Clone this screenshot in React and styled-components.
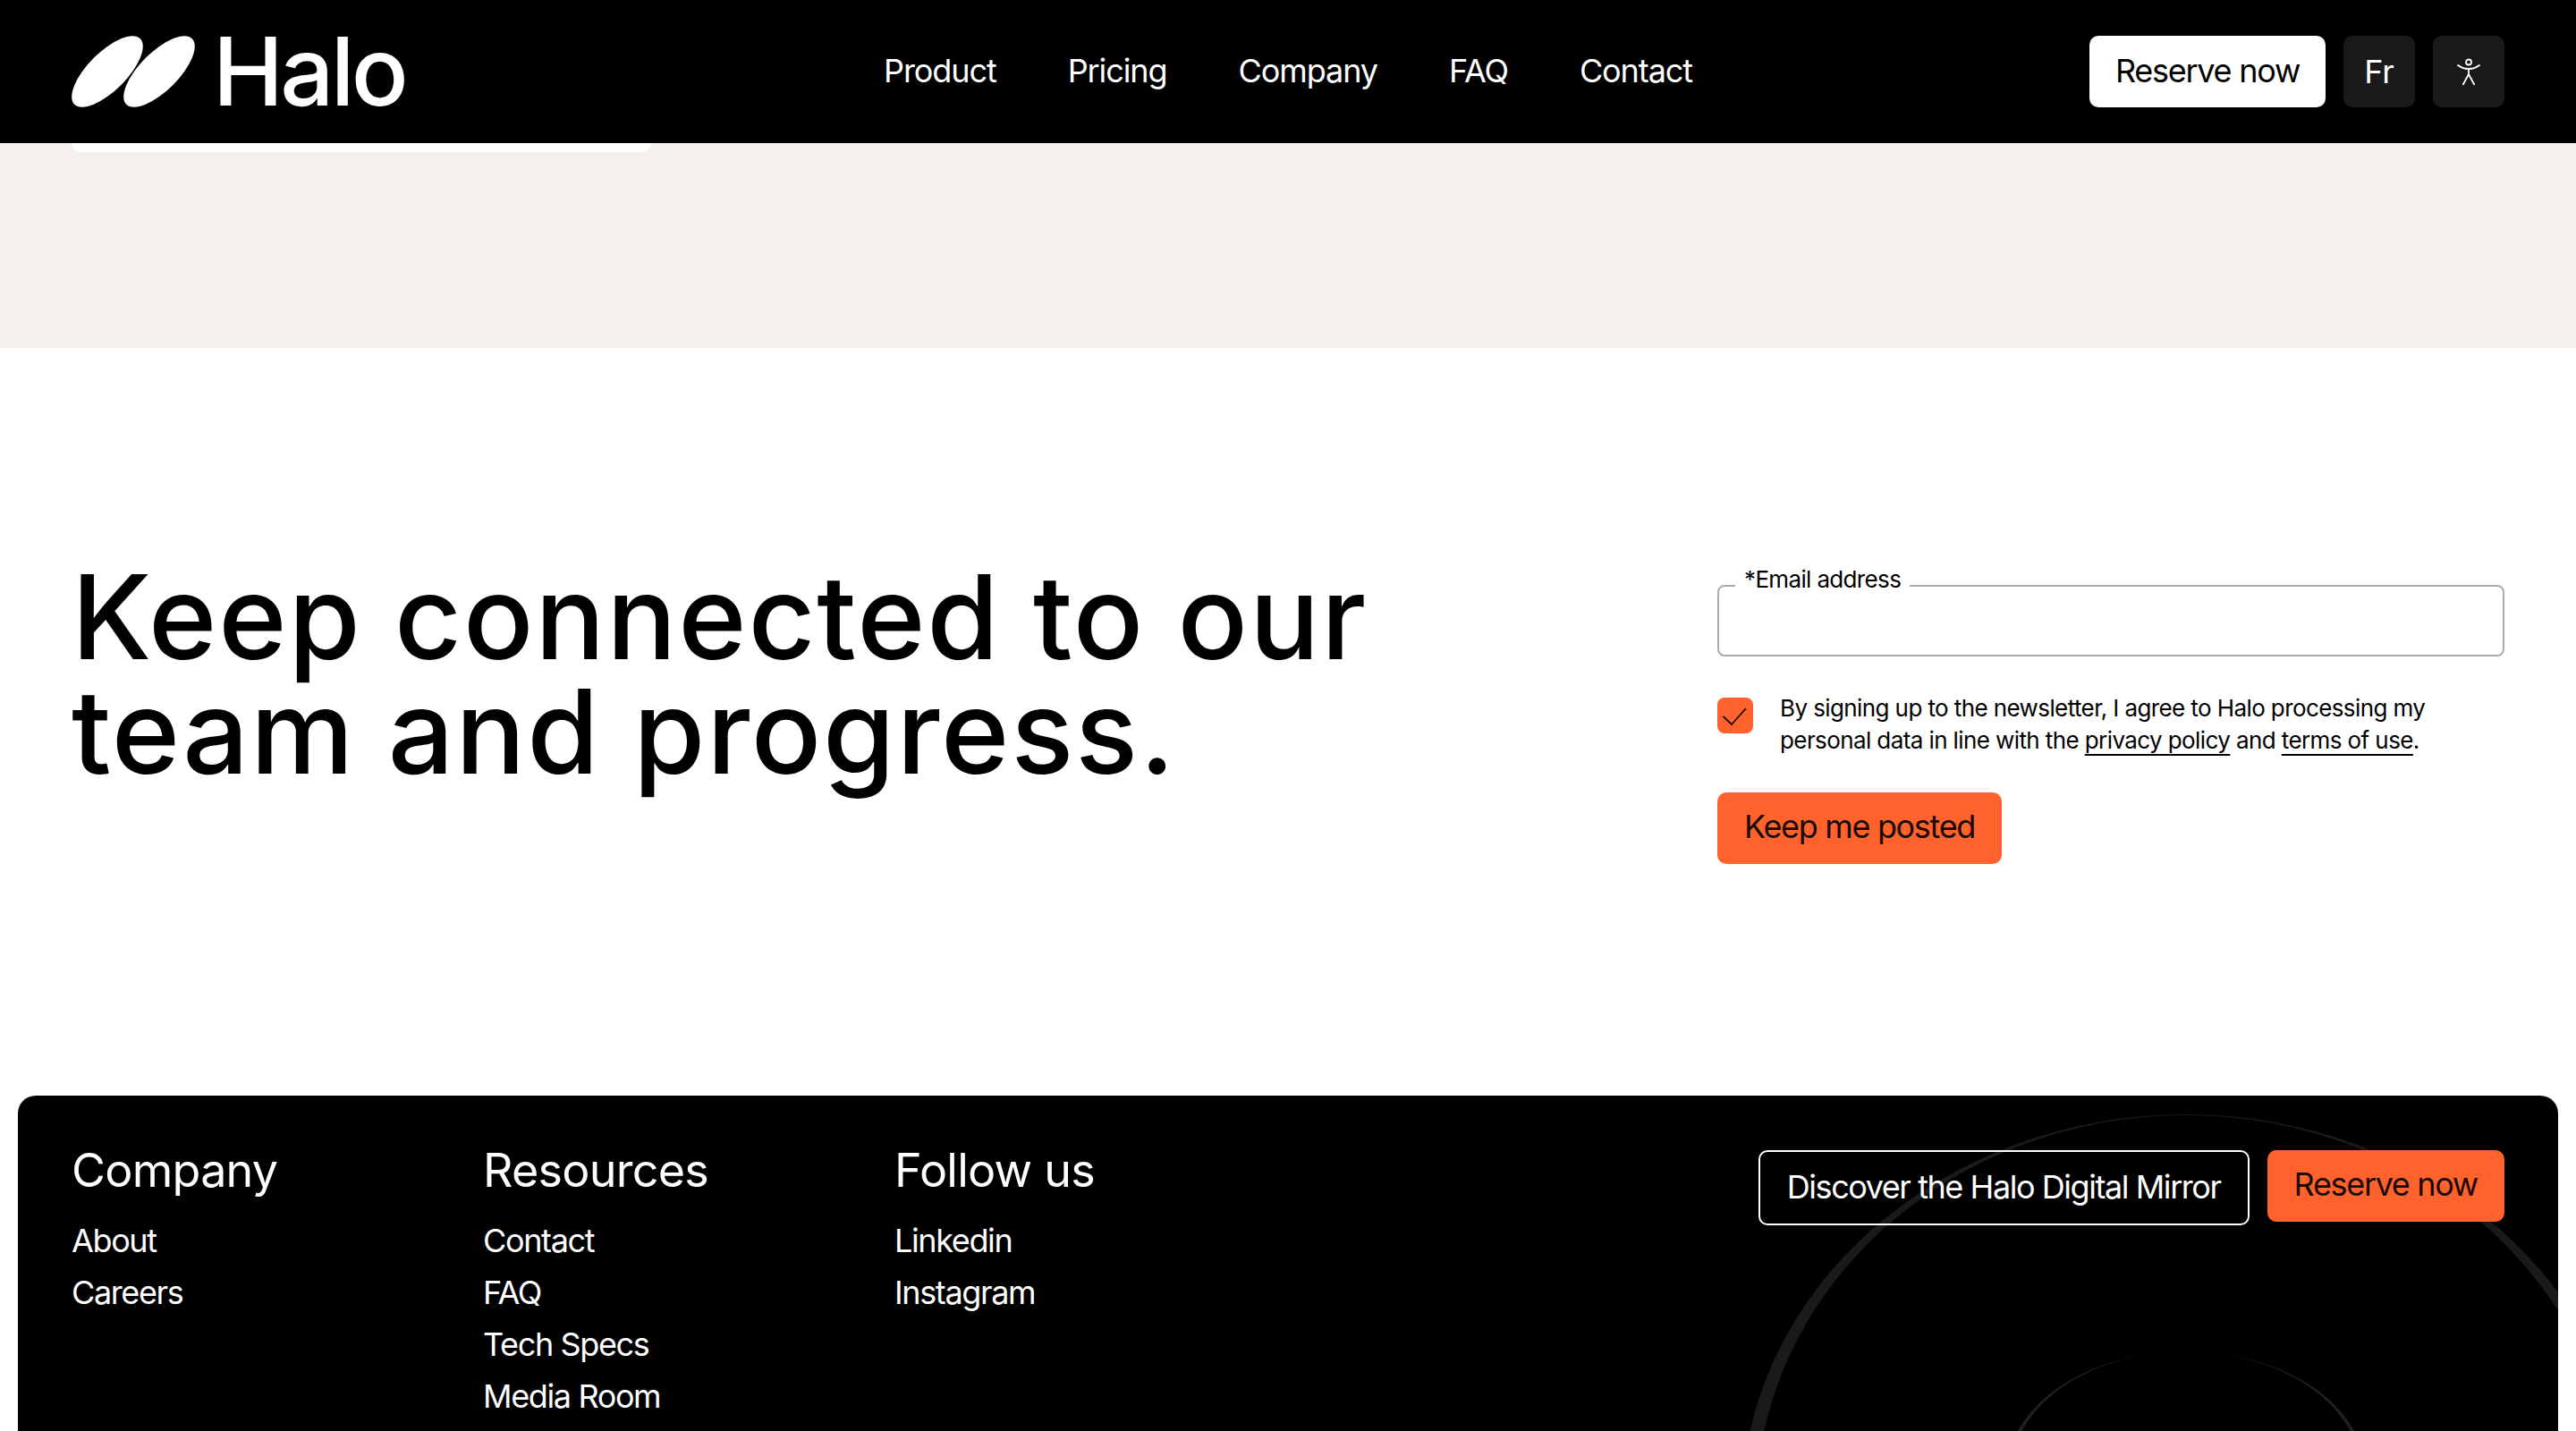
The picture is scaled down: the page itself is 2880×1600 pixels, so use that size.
import React from 'react';
import styled, { createGlobalStyle } from 'styled-components';

const GlobalStyle = createGlobalStyle`
  html, body {
    margin: 0;
    padding: 0;
    background: #ffffff;
  }
  * {
    box-sizing: border-box;
  }
`;

const footerColumns = [
  { title: 'Company', links: ['About', 'Careers'] },
  { title: 'Resources', links: ['Contact', 'FAQ', 'Tech Specs', 'Media Room'] },
  { title: 'Follow us', links: ['Linkedin', 'Instagram'] },
];

export default function App() {
  return (
    <Page>
      <GlobalStyle />
      <Header>
        <LogoLink href="#">
          <svg width="138" height="80" viewBox="0 0 138 80" fill="#fff">
            <ellipse cx="40" cy="40" rx="52" ry="21.5" transform="rotate(-45 40 40)" />
            <ellipse cx="98" cy="40" rx="52" ry="21.5" transform="rotate(-45 98 40)" />
          </svg>
          <LogoText>Halo</LogoText>
        </LogoLink>
        <Nav>
          {['Product', 'Pricing', 'Company', 'FAQ', 'Contact'].map((item) => (
            <NavLink key={item} href="#">{item}</NavLink>
          ))}
        </Nav>
        <Actions>
          <HeaderButton>Reserve now</HeaderButton>
          <SquareButton>Fr</SquareButton>
          <SquareButton aria-label="Accessibility">
            <svg width="32" height="32" viewBox="0 0 32 32" fill="none" stroke="#fff" strokeWidth="1.8">
              <circle cx="16" cy="5.5" r="3" />
              <path d="M3.5 8.5C7 11.5 11 13 16 13s9-1.5 12.5-4.5" />
              <path d="M16 13v6M16 19l-6.5 12M16 19l6.5 12" />
            </svg>
          </SquareButton>
        </Actions>
      </Header>

      <SandBand>
        <CardEdge />
      </SandBand>

      <Newsletter>
        <Heading>Keep connected to our<br />team and progress.</Heading>
        <SignupForm>
          <Field>
            <FieldLabel htmlFor="email">*Email address</FieldLabel>
            <EmailInput id="email" type="email" />
          </Field>
          <ConsentRow>
            <CheckBox>
              <svg width="40" height="40" viewBox="0 0 40 40" fill="none" stroke="#1a0a04" strokeWidth="1.8">
                <path d="M6.5 21l9.5 9L32 12" />
              </svg>
            </CheckBox>
            <ConsentText>
              By signing up to the newsletter, I agree to Halo processing my personal data in line with the{' '}
              <TextLink href="#">privacy policy</TextLink> and <TextLink href="#">terms of use</TextLink>.
            </ConsentText>
          </ConsentRow>
          <OrangeButton type="button">Keep me posted</OrangeButton>
        </SignupForm>
      </Newsletter>

      <Footer>
        <Rings viewBox="0 0 2840 375" width="2840" height="375" fill="none">
          <path
            fillRule="evenodd"
            fill="#1a1a1a"
            d="M1927 461a497 440 0 1 0 994 0a497 440 0 1 0 -994 0zM1943 461a481 439 0 1 0 962 0a481 439 0 1 0 -962 0z"
          />
          <path
            fillRule="evenodd"
            fill="#1f1f1f"
            d="M2224 421a200 135 0 1 0 400 0a200 135 0 1 0 -400 0zM2229 421a195 135 0 1 0 390 0a195 135 0 1 0 -390 0z"
          />
        </Rings>
        <Columns>
          {footerColumns.map((column) => (
            <Column key={column.title}>
              <ColumnTitle>{column.title}</ColumnTitle>
              {column.links.map((link) => (
                <FooterLink key={link} href="#">{link}</FooterLink>
              ))}
            </Column>
          ))}
        </Columns>
        <FooterActions>
          <OutlineButton type="button">Discover the Halo Digital Mirror</OutlineButton>
          <OrangeButton type="button">Reserve now</OrangeButton>
        </FooterActions>
      </Footer>
    </Page>
  );
}

const Page = styled.div`
  width: 2880px;
  height: 1600px;
  overflow: hidden;
  font-family: Inter, 'Liberation Sans', sans-serif;
  color: #000000;
`;

const Header = styled.header`
  display: grid;
  grid-template-columns: 1fr auto 1fr;
  align-items: center;
  height: 160px;
  padding: 0 80px;
  background-color: #000000;
`;

const LogoLink = styled.a`
  display: flex;
  align-items: center;
  gap: 20px;
  color: #ffffff;
  text-decoration: none;
`;

const LogoText = styled.span`
  font-size: 106px;
  line-height: 80px;
  font-weight: 500;
  letter-spacing: -0.035em;
`;

const Nav = styled.nav`
  display: flex;
  gap: 80px;
  padding-bottom: 3px;
`;

const NavLink = styled.a`
  font-size: 36px;
  color: #ffffff;
  text-decoration: none;
  letter-spacing: -0.03em;
`;

const Actions = styled.div`
  display: flex;
  justify-content: flex-end;
  gap: 20px;
`;

const HeaderButton = styled.button`
  height: 80px;
  width: 264px;
  padding: 0 0 3px;
  border: none;
  border-radius: 10px;
  background-color: #ffffff;
  color: #000000;
  font-family: inherit;
  font-size: 36px;
  letter-spacing: -0.035em;
`;

const SquareButton = styled.button`
  display: flex;
  align-items: center;
  justify-content: center;
  width: 80px;
  height: 80px;
  padding: 0;
  border: none;
  border-radius: 10px;
  background-color: #1a1a1a;
  color: #ffffff;
  font-family: inherit;
  font-size: 36px;
`;

const SandBand = styled.div`
  height: 229px;
  padding: 0 80px;
  background-color: #f4f1ed;
`;

const CardEdge = styled.div`
  width: 648px;
  height: 10px;
  border-radius: 0 0 16px 16px;
  background-color: #ffffff;
`;

const Newsletter = styled.section`
  display: flex;
  justify-content: space-between;
  align-items: flex-start;
  height: 836px;
  padding: 237px 80px 0;
`;

const Heading = styled.h2`
  margin: 0;
  font-size: 130px;
  line-height: 128px;
  font-weight: 450;
  letter-spacing: 0.014em;
  white-space: nowrap;
`;

const SignupForm = styled.form`
  display: flex;
  flex-direction: column;
  align-items: flex-start;
  width: 880px;
  padding-top: 28px;
`;

const Field = styled.div`
  position: relative;
  width: 100%;
`;

const FieldLabel = styled.label`
  position: absolute;
  top: -24px;
  left: 20px;
  padding: 0 10px;
  background-color: #ffffff;
  font-size: 26px;
  line-height: 36px;
  letter-spacing: -0.025em;
`;

const EmailInput = styled.input`
  display: block;
  width: 100%;
  height: 80px;
  border: 2px solid #aaaaaa;
  border-radius: 8px;
  background: transparent;
`;

const ConsentRow = styled.div`
  display: flex;
  gap: 30px;
  margin-top: 46px;
`;

const CheckBox = styled.span`
  flex: none;
  width: 40px;
  height: 40px;
  border-radius: 8px;
  background-color: #ff622c;
`;

const ConsentText = styled.p`
  margin: -6px 0 0;
  font-size: 26px;
  line-height: 36px;
  letter-spacing: -0.023em;
`;

const TextLink = styled.a`
  color: #000000;
  text-decoration: underline;
  text-decoration-thickness: 2px;
  text-underline-offset: 6px;
`;

const OrangeButton = styled.button`
  height: 80px;
  padding: 0 30px 4px;
  border: none;
  border-radius: 10px;
  background-color: #ff622c;
  color: #1a0a04;
  font-family: inherit;
  font-size: 36px;
  letter-spacing: -0.037em;

  form & {
    margin-top: 40px;
  }
`;

const OutlineButton = styled.button`
  height: 84px;
  padding: 0 30px 3px;
  border: 2px solid #ffffff;
  border-radius: 10px;
  background: transparent;
  color: #ffffff;
  font-family: inherit;
  font-size: 36px;
  letter-spacing: -0.04em;
`;

const Footer = styled.footer`
  position: relative;
  display: flex;
  justify-content: space-between;
  align-items: flex-start;
  height: 375px;
  margin: 0 20px;
  padding: 52px 60px 0;
  overflow: hidden;
  border-radius: 20px 20px 0 0;
  background-color: #000000;
`;

const Rings = styled.svg`
  position: absolute;
  top: 0;
  left: 0;
`;

const Columns = styled.div`
  position: relative;
  display: grid;
  grid-template-columns: repeat(3, 460px);
`;

const Column = styled.div`
  display: flex;
  flex-direction: column;
  align-items: flex-start;
`;

const ColumnTitle = styled.h3`
  margin: 0 0 17px;
  font-size: 52px;
  line-height: 64px;
  font-weight: 400;
  letter-spacing: -0.014em;
  color: #ffffff;
`;

const FooterLink = styled.a`
  font-size: 36px;
  line-height: 58px;
  color: #ffffff;
  text-decoration: none;
  letter-spacing: -0.038em;
`;

const FooterActions = styled.div`
  position: relative;
  display: flex;
  align-items: flex-start;
  gap: 20px;
  margin-top: 9px;
`;
